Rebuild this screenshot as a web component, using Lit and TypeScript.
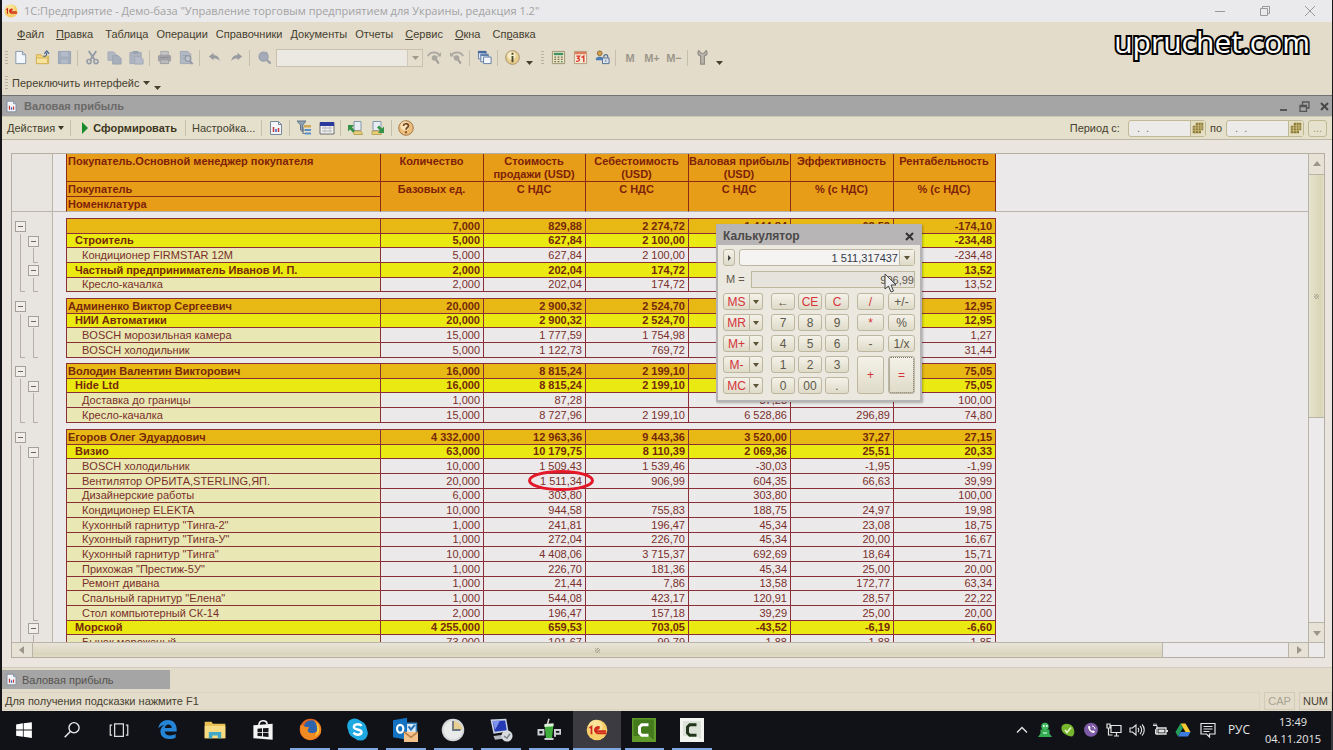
import { LitElement, html, svg, css, nothing } from "lit";
import { customElement } from "lit/decorators.js";
import { classMap } from "lit/directives/class-map.js";

type Row = [level: number, name: string, ...values: string[]];

const GROUPS: Row[][] = [
  [
    [0, "", "7,000", "829,88", "2 274,72", "-1 444,84", "-63,52", "-174,10"],
    [1, "Строитель", "5,000", "627,84", "2 100,00", "-1 472,16", "-70,10", "-234,48"],
    [2, "Кондиционер FIRMSTAR 12M", "5,000", "627,84", "2 100,00", "-1 472,16", "-70,10", "-234,48"],
    [1, "Частный предприниматель Иванов И. П.", "2,000", "202,04", "174,72", "27,32", "15,64", "13,52"],
    [2, "Кресло-качалка", "2,000", "202,04", "174,72", "27,32", "15,64", "13,52"],
  ],
  [
    [0, "Админенко Виктор Сергеевич", "20,000", "2 900,32", "2 524,70", "375,62", "14,88", "12,95"],
    [1, "НИИ Автоматики", "20,000", "2 900,32", "2 524,70", "375,62", "14,88", "12,95"],
    [2, "BOSCH морозильная камера", "15,000", "1 777,59", "1 754,98", "22,61", "1,29", "1,27"],
    [2, "BOSCH холодильник", "5,000", "1 122,73", "769,72", "353,01", "45,86", "31,44"],
  ],
  [
    [0, "Володин Валентин Викторович", "16,000", "8 815,24", "2 199,10", "6 616,14", "300,86", "75,05"],
    [1, "Hide Ltd", "16,000", "8 815,24", "2 199,10", "6 616,14", "300,86", "75,05"],
    [2, "Доставка до границы", "1,000", "87,28", "", "87,28", "", "100,00"],
    [2, "Кресло-качалка", "15,000", "8 727,96", "2 199,10", "6 528,86", "296,89", "74,80"],
  ],
  [
    [0, "Егоров Олег Эдуардович", "4 332,000", "12 963,36", "9 443,36", "3 520,00", "37,27", "27,15"],
    [1, "Визио", "63,000", "10 179,75", "8 110,39", "2 069,36", "25,51", "20,33"],
    [2, "BOSCH холодильник", "10,000", "1 509,43", "1 539,46", "-30,03", "-1,95", "-1,99"],
    [2, "Вентилятор ОРБИТА,STERLING,ЯП.", "20,000", "1 511,34", "906,99", "604,35", "66,63", "39,99"],
    [2, "Дизайнерские работы", "6,000", "303,80", "", "303,80", "", "100,00"],
    [2, "Кондиционер ELEKTA", "10,000", "944,58", "755,83", "188,75", "24,97", "19,98"],
    [2, "Кухонный гарнитур \"Тинга-2\"", "1,000", "241,81", "196,47", "45,34", "23,08", "18,75"],
    [2, "Кухонный гарнитур \"Тинга-У\"", "1,000", "272,04", "226,70", "45,34", "20,00", "16,67"],
    [2, "Кухонный гарнитур \"Тинга\"", "10,000", "4 408,06", "3 715,37", "692,69", "18,64", "15,71"],
    [2, "Прихожая \"Престиж-5У\"", "1,000", "226,70", "181,36", "45,34", "25,00", "20,00"],
    [2, "Ремонт дивана", "1,000", "21,44", "7,86", "13,58", "172,77", "63,34"],
    [2, "Спальный гарнитур \"Елена\"", "1,000", "544,08", "423,17", "120,91", "28,57", "22,22"],
    [2, "Стол компьютерный СК-14", "2,000", "196,47", "157,18", "39,29", "25,00", "20,00"],
    [1, "Морской", "4 255,000", "659,53", "703,05", "-43,52", "-6,19", "-6,60"],
    [2, "Бычок мороженый", "73,000", "101,67", "99,79", "1,88", "1,88", "1,85"],
  ],
];

const icon = (size: number, body: unknown) =>
  html`<svg width=${size} height=${size} viewBox="0 0 16 16" fill="none" aria-hidden="true">${body}</svg>`;

const report = svg`<path d="M2.5 1.5h8l3 3v10h-11z" fill="#f3f5f8" stroke="#77889c"/><path d="M10.500 1.500v3h3" stroke="#77889c"/><path d="M5.500 7v5" stroke="#c43a3a" stroke-width="1.500"/><path d="M8 9v3" stroke="#3a5ec4" stroke-width="1.500"/><path d="M10.500 8v4" stroke="#c43a3a" stroke-width="1.500"/>`;
const oneC = svg`<circle cx="8" cy="8" r="7.500" fill="#f6cf6a"/><circle cx="7" cy="5.500" r="5" fill="#fbe7a4" opacity=".8"/><path d="M2.500 6.500l1.500-1v5.500M10 6.200a2.300 2.300 0 1 0-1.500 4.200h6.500M9.500 7.500a1 1 0 1 0-1 1.400h6" stroke="#cf2a1b" stroke-width="1.300"/>`;
const wheel = svg`<path d="M1 6.500c2-5 10-5 12.500-1" stroke="#aeaba4" stroke-width="2"/><path d="M15 2v5h-4.500z" fill="#aeaba4"/><circle cx="8" cy="8.500" r="2.500" fill="#aba8a2" stroke="#a29f99"/><path d="M10 10.500l2.500 4" stroke="#a29f99" stroke-width="2.200"/>`;
const wheelBack = svg`<path d="M15 6.500c-2-5-10-5-12.500-1" stroke="#aeaba4" stroke-width="2"/><path d="M1 2v5h4.500z" fill="#aeaba4"/><circle cx="8" cy="8.500" r="2.500" fill="#aba8a2" stroke="#a29f99"/><path d="M10 10.500l2.500 4" stroke="#a29f99" stroke-width="2.200"/>`;

const I = {
  doc: svg`<path d="M3 1.500h7l3.500 3.500v9.500H3z" fill="#f4f7fb" stroke="#8598ad"/><path d="M10 1.500V5h3.500" fill="#cfdbe8" stroke="#8598ad"/>`,
  open: svg`<path d="M1.500 5h5l1 1.500h7v8h-13z" fill="#f3d678" stroke="#d0b05c"/><path d="M1.500 14.500v-6h12v6z" fill="#f8e39a" stroke="#d0b05c"/><path d="M9 7c3 0 3.500-1 3.500-4M10 4l2.500-3L15 4" stroke="#49678f" stroke-width="1.300"/>`,
  save: svg`<path d="M1.500 1.500h13v13h-13z" fill="#a3acbb" stroke="#98a1b1"/><path d="M4 2h8v5H4z" fill="#b3bbc8"/><path d="M4.500 10h7v4.500h-7z" fill="#b2bac6"/>`,
  cut: svg`<path d="M4 1l6 9M12 1L6 10" stroke="#959ca7" stroke-width="2"/><circle cx="4.300" cy="12.300" r="2.200" stroke="#959ca7" stroke-width="1.700"/><circle cx="11.700" cy="12.300" r="2.200" stroke="#959ca7" stroke-width="1.700"/>`,
  copy: svg`<path d="M1 2h6l3 3v6H1z" fill="#b1b8c3" stroke="#a5acb8"/><path d="M6 6h6l3 3v6H6z" fill="#a7afbb" stroke="#9ca4b0"/>`,
  paste: svg`<path d="M1 2.500h12v12H1z" fill="#adb4bf" stroke="#a2a9b5"/><path d="M4 1h6v3H4z" fill="#98a1ae"/><path d="M6 7h6l3 3v5H6z" fill="#b5bcc7" stroke="#a2a9b5"/>`,
  print: svg`<path d="M4 1.500h8v5H4z" fill="#c4c4c6" stroke="#a5a5a8"/><path d="M1 6l2-1h10l2 1v6H1z" fill="#a2a2a6"/><path d="M3.500 10.500h9v4h-9z" fill="#bcbcbf" stroke="#9a9a9e"/><path d="M3 8h10" stroke="#8e8e93"/>`,
  preview: svg`<path d="M1.500 1.500h8l3 3v10h-11z" fill="#b3b9c4" stroke="#a0a8b4"/><path d="M4 6h5M4 9h3" stroke="#98a1ae"/><circle cx="9.500" cy="9" r="3" fill="#bfc4cc" stroke="#9299a5" stroke-width="1.300"/><path d="M11.500 11.500l3 3.500" stroke="#9299a5" stroke-width="2"/>`,
  undo: svg`<path d="M2 7l5-4v2.500c4 0 6 2 6.500 6.500C12 9.500 10 8.700 7 8.700V11z" fill="#999ba0"/>`,
  redo: svg`<path d="M14 7L9 3v2.500c-4 0-6 2-6.500 6.500C4 9.500 6 8.700 9 8.700V11z" fill="#999ba0"/>`,
  find: svg`<circle cx="7" cy="7" r="4.700" fill="#a5acb8" stroke="#9ba2ae" stroke-width="1.600"/><path d="M4 2h7v3H4z" fill="#a0a7b3"/><path d="M10.500 10.500l4 4" stroke="#9fa1a7" stroke-width="2.600"/>`,
  windows: svg`<path d="M1.500 1.500h8v8h-8z" fill="#dce6f2" stroke="#5e7da5"/><path d="M1 1h9v2.500H1z" fill="#466a9b"/><path d="M4 4.500h8v8H4z" fill="#e8eef6" stroke="#5e7da5"/><path d="M4 4.500h8v2H4z" fill="#5e80ad"/><path d="M7 7.500h8v7H7z" fill="#f4f7fb" stroke="#5e7da5"/>`,
  info: svg`<circle cx="8" cy="8" r="7.300" fill="#e8cf8e" stroke="#a98d63"/><circle cx="7" cy="6" r="4.500" fill="#f6ecc8"/><path d="M8 3v2M8 6.500V13" stroke="#4d4b2c" stroke-width="2"/>`,
  calc: svg`<path d="M1.500 1.500h13v13h-13z" fill="#ece5cb" stroke="#9a916d"/><path d="M3 3h10v2.500H3z" fill="#3d9162"/><path d="M3.500 7.500h2M7 7.500h2M10.500 7.500h2M3.500 10h2M7 10h2M10.500 10h2M3.500 12.500h2M7 12.500h2" stroke="#77724f" stroke-width="1.300"/><path d="M10.500 12.500h2" stroke="#3d9162" stroke-width="1.300"/>`,
  calendar: svg`<path d="M1.500 1.500h13v13h-13z" fill="#f6ead7" stroke="#b39a77"/><path d="M2 2h12v2.500H2z" fill="#dd7a58"/><path d="M3.500 6.500h3.500l-1.800 2.400c2.700 0 2.200 3.800-1.900 3.100M9 8l2.500-1.500V13" stroke="#dc3b2d" stroke-width="1.500"/>`,
  users: svg`<circle cx="5" cy="3.500" r="2.500" fill="#d5a049" stroke="#86683b"/><path d="M1 9c1-2.500 7-2.500 8 0v2H1z" fill="#4a7bb4"/><path d="M8 8.500h7v6H8z" fill="#dbe3ed" stroke="#516d92"/><path d="M9.500 8V6.500c0-2 4-2 4 0V8" stroke="#516d92" stroke-width="1.300"/><path d="M11.500 10.500v2" stroke="#516d92"/>`,
  wrench: svg`<path d="M4 .500c-2 3-.5 5 2 6v8.500h4V6.500c2.500-1 4-3 2-6L9.700 3.500H6.300z" fill="#bcb7ae" stroke="#8e8a82" stroke-width="1.200"/>`,
  filter: svg`<path d="M1 1h9L6.800 5v7L4.500 10V5z" fill="#8fa1b3" stroke="#647688"/><path d="M8 5h7v2.500H8z" fill="#cfa955"/><path d="M9 9h6v2H9zM9 12.500h6v2H9z" fill="#5c8fc5"/><path d="M7 10h2M7 13.500h2M7 7v7" stroke="#68798a"/>`,
  sheet: svg`<path d="M1 2.500h14v11.500H1z" fill="#f2f2ee" stroke="#6b6b73"/><path d="M1 2h14v4H1z" fill="#2c3aa0"/><path d="M3 8h10M3 11h10" stroke="#a9abb4"/><path d="M6 6v8M11 6v8" stroke="#c1c2c8"/>`,
  restoreL: svg`<path d="M7 1.500h7v9H7z" fill="#e8edf3" stroke="#8496ab"/><path d="M6 11h8l1.500 3.500H7z" fill="#e6cd77" stroke="#bba55a"/><path d="M1 5v6.500L3 9.500l3 3 2-2-3-3L7 5z" fill="#349348"/>`,
  restoreR: svg`<path d="M3 1.500h8v9H3z" fill="#e8edf3" stroke="#8496ab"/><path d="M2 11h8l1.500 3.500H2z" fill="#e6cd77" stroke="#bba55a"/><path d="M14 13V6.500l-2 2-3-3-2 2 3 3L8 13z" fill="#349348"/>`,
  help: svg`<circle cx="8" cy="8" r="7.300" fill="#edbd7c" stroke="#a77949"/><circle cx="7" cy="6" r="4.500" fill="#f8e1b8"/><path d="M5.500 6c0-3 5-3 5-.2C10.500 7.500 8 7.500 8 9.700M8 11.300v1.900" stroke="#734320" stroke-width="1.700"/>`,
  grid: svg`<path d="M5 1h10v10h-3v4H1V5h4z" fill="#8c7a39"/><path d="M1 8h14M1 11.500h11M5 5h10M4.500 5v10M8.500 1v14M12 1v10" stroke="#d3c386"/>`,
};

const T = {
  start: svg`<path d="M1 3l6-1v5.600H1zM7.700 1.900L15 1v6.600H7.700zM1 8.400h6V14l-6-1zM7.700 8.400H15V15l-7.300-1z" fill="#fff"/>`,
  search: svg`<circle cx="9.800" cy="6" r="4.500" stroke="#eee" stroke-width="1.200"/><path d="M6.500 9.300L1.500 14.500" stroke="#eee" stroke-width="1.300"/>`,
  tasks: svg`<path d="M4.500 3h7v10h-7zM2.500 4H1v8h1.500M13.500 4H15v8h-1.500" stroke="#ddd"/>`,
  edge: svg`<path d="M1 7.300C1.600 3 4.600.800 8.300.800 12.700.800 15 4 15 8v1.600H5.800c.2 2.200 2 3 4.200 3 1.700 0 3-.4 4.200-1.100v2.800c-1.300.7-3 1-4.900 1C5 15.300 2.600 12.900 2.600 9.600c0-2.300 1.200-4 3-5C3.600 4.900 2 5.900 1 7.300zM5.900 6.900h5.300c0-1.700-.9-2.700-2.500-2.700S6.200 5.400 5.900 6.900z" fill="#2585d6"/>`,
  folder: svg`<path d="M.500 2h5l1 1.500h9V14H.500z" fill="#e8bf52"/><path d="M.500 5h15v9H.500z" fill="#f7dc84"/><path d="M3.500 14v-4.500h9V14h-2.500v-2H6v2z" fill="#3fa9c9"/>`,
  store: svg`<path d="M1 4.500l14-1V15L1 14z" fill="#f4f4f4"/><path d="M5 4.500c0-4 6-4.500 6-.5" stroke="#f4f4f4" stroke-width="1.200"/><path d="M4 7l3.300-.2v2.600H4zM8 6.700l4-.2v2.900H8zM4 10h3.300v2.600L4 12.400zM8 10h4v3l-4-.3z" fill="#15151a"/>`,
  firefox: svg`<circle cx="8" cy="8" r="7.500" fill="#e2641c"/><circle cx="8.500" cy="6.500" r="5" fill="#2e63ae"/><path d="M1 5c1 0 2 0 3 1l3 .500-1 2c0 2 4 3 6.500.500C13 6 12 3 10 1.500c5 1 6 6 5 9-2 4-7 6-11 3.500C1 12 .500 8 1 5z" fill="#f08a22"/><path d="M12 3c3 3 3 8-1 10 2-3 2-6 1-10z" fill="#f9c83c"/>`,
  skype: svg`<circle cx="6" cy="5.500" r="5.200" fill="#1fa9e1"/><circle cx="10" cy="10.500" r="5.200" fill="#1fa9e1"/><circle cx="8" cy="8" r="6.500" fill="#1fa9e1"/><path d="M10.800 5.500C9.800 4 5.500 3.900 5.500 6.200c0 2.300 5.300 1.300 5.300 3.700 0 2.200-4.400 2.200-5.600.3" stroke="#fff" stroke-width="1.700"/>`,
  outlook: svg`<path d="M6 4h9v7H6z" fill="#dbe9f6" stroke="#3180c0"/><path d="M0 2l9-1.500v14L0 13z" fill="#1272c1"/><ellipse cx="4.600" cy="7.500" rx="2" ry="2.500" stroke="#fff" stroke-width="1.400"/><path d="M10 6l1.500 2L14 5" stroke="#2872b7" stroke-width="1.300"/><path d="M7 9.500h9V16H7z" fill="#f2c28c"/><path d="M7 9.500l4.500 3.500L16 9.500" stroke="#b97c40"/>`,
  clock: svg`<circle cx="8" cy="8" r="7.500" fill="#d3d7d9"/><circle cx="8" cy="8" r="6.200" fill="#e9ebea"/><path d="M8 8V1.800A6.200 6.200 0 0 1 14.200 8z" fill="#e7cf94"/><path d="M8 2v6h5" stroke="#6d757c" stroke-width="1.200"/>`,
  remote: svg`<path d="M1 1l10.500-.5L13 9 3 10.500z" fill="#cbd3e4"/><path d="M2.300 2l8.500-.3 1 6.500-8 .9z" fill="#2639b5"/><path d="M2.300 2l5-.2-3.200 6z" fill="#7d92e8"/><path d="M3 12l8-1 1 2.500-8 1z" fill="#b5b9c1"/><circle cx="12" cy="12" r="3.700" fill="#d9dcdf"/><path d="M10 12l2 1.500 2-3" stroke="#78828c"/>`,
  cup: svg`<path d="M5 4.500l6-.5-1 9.500H6z" fill="#3fae3c"/><path d="M5 4l6-.5v2L5 6z" fill="#dff2dc"/><path d="M7 4l1-3.500" stroke="#ddd"/><path d="M1 8h3.300v3H1zM12 12.500V8h3.500v2.500H12M5 14h6" stroke="#cdd1d3" stroke-width="1.300"/>`,
  oneC,
  camG: svg`<path d="M0 0h16v16H0z" fill="#5f9a2a"/><path d="M1 1h13.500v13.500l-3-2.500H1z" fill="#437a1c"/><path d="M11 4.500H6.500L5 6v4l1.500 1.500H11" stroke="#fff" stroke-width="2"/>`,
  camW: svg`<path d="M0 0h16v16H0z" fill="#f2f5ef"/><path d="M2 2h12v12l-3-2H2z" fill="#dde2d8"/><path d="M11 4.500H6.500L5 6v4l1.500 1.500H11" stroke="#20361a" stroke-width="2"/>`,
  up: svg`<path d="M3 10.500l5-5 5 5" stroke="#e4e4e4" stroke-width="1.400"/>`,
  frog: svg`<circle cx="8" cy="4.500" r="3.700" fill="#42b95f"/><path d="M3.500 7.500h9v4l2.500 3.500H1l2.500-3.500z" fill="#35ab54"/><circle cx="6.800" cy="4" r="1" fill="#eaffef"/><circle cx="9.800" cy="4" r="1" fill="#eaffef"/><path d="M6 11h4" stroke="#a8ecb7" stroke-width="1.500"/>`,
  leaf: svg`<path d="M1.500 5C3 .500 10 1 12.500 4.500 15 8 15 13 12 14.500 7 14 .500 11 1.500 5z" fill="#77b52c"/><path d="M5 8l2 2.500 4-5" stroke="#e9f7cc" stroke-width="1.500"/>`,
  viber: svg`<circle cx="8" cy="7.700" r="7" fill="#7c5aa5"/><path d="M5 4.500c0 3 3 6.500 6 6.500l1-1.500-2-1.200-1 .9-2.200-2.500L7.700 6 6.500 3.800z" fill="#fff"/><path d="M9 4c2 .2 3 1.500 3 3.300" stroke="#fff"/>`,
  net: svg`<path d="M5 3.500h10v7H5zM8 14h5M10.500 10.500V14M1 2h3v4H1zM2.500 6v7h4" stroke="#e4e4e4" stroke-width="1.200"/>`,
  sound: svg`<path d="M1 6v4h2.500L7 13V3L3.500 6zM9 6c1 1 1 3 0 4M11 4c2.200 2 2.200 6 0 8M13 2.500c3 3 3 8 0 11" stroke="#e4e4e4" stroke-width="1.100"/>`,
  battery: svg`<path d="M5 6h9v6H5zM15.300 8v2" stroke="#e4e4e4" stroke-width="1.300"/><path d="M6.500 7.500h6v3h-6z" fill="#e4e4e4"/><path d="M1 3.500h4v2.500L3.500 7.500V12h2M2 1.500v2M4 1.500v2" stroke="#e4e4e4"/>`,
  drive: svg`<path d="M5.500 1.500h5l5 8.500h-5z" fill="#f5c933"/><path d="M5.500 1.500L.500 10 3 14.500l5-8.700z" fill="#259b5a"/><path d="M5.700 10h9.800L13 14.500H3z" fill="#3b7de0"/>`,
  note: svg`<path d="M1 1.500h14v10.500H9.500v3L6.500 12H1zM3.500 4.500h9M3.500 7h9M3.500 9.500h6" stroke="#e4e4e4" stroke-width="1.200"/>`,
};

@customElement("app-toolbar")
class AppToolbar extends LitElement {
  static styles = css`
    :host { display: block; color: #45402f; }
    nav, .bar { display: flex; align-items: center; height: 25px; padding-left: 3px; }
    nav { padding-left: 14px; gap: 6px; height: 23px; }
    a { color: inherit; text-decoration: none; padding: 0 1px; }
    .wide { margin-right: 4px; }
    button { font: inherit; color: inherit; border: 0; background: none; padding: 0; height: 22px; width: 22px; display: grid; place-items: center; flex: none; }
    .mem { color: #9c978a; font-weight: bold; }
    .sep { width: 1px; height: 16px; background: #c5beab; margin: 0 3px 0 2px; flex: none; }
    .grip { width: 3px; height: 14px; flex: none; background: repeating-linear-gradient(#b9b2a0 0 1px, transparent 1px 3px); }
    .gap { margin: 0 3px 0 6px; }
    .first { margin-left: 1px; }
    .more { width: 12px; place-items: end center; height: 15px; }
    .combo { display: flex; width: 147px; height: 18px; border: 1px solid #c9c1ae; box-sizing: border-box; background: #ece9e3; margin-left: 1px; }
    .combo input { flex: 1; min-width: 0; border: 0; background: none; outline: 0; }
    .combo button { width: 15px; height: 16px; border-left: 1px solid #d0c9b9; background: #e5decf; color: #a09a89; }
    .text { width: auto; display: flex; gap: 3px; align-items: center; margin: 0 2px 0 4px; }
  `;
  render() {
    const b = (label: string, g: unknown) => html`<button aria-label=${label} title=${label}>${icon(15, g)}</button>`;
    const sep = html`<span class="sep"></span>`;
    const arrow = html`<svg width="7" height="4" viewBox="0 0 7 4"><path d="M0 0h7L3.500 4z" fill="currentColor"/></svg>`;
    return html`
      <nav aria-label="Главное меню">
        <a class="wide" href="#file"><u>Ф</u>айл</a><a class="wide" href="#edit"><u>П</u>равка</a><a href="#table">Таблица</a><a href="#ops">Операции</a><a href="#refs">Справочники</a><a href="#docs">Документы</a><a class="wide" href="#reports">Отчеты</a><a class="wide" href="#service"><u>С</u>ервис</a><a class="wide" href="#windows"><u>О</u>кна</a><a href="#help">Сп<u>р</u>авка</a>
      </nav>
      <div class="bar">
        <span class="grip"></span><span class="first"></span>
        ${b("Новый", I.doc)}${b("Открыть", I.open)}${b("Сохранить", I.save)}${sep}
        ${b("Вырезать", I.cut)}${b("Копировать", I.copy)}${b("Вставить", I.paste)}${sep}
        ${b("Печать", I.print)}${b("Просмотр", I.preview)}${sep}
        ${b("Отменить", I.undo)}${b("Вернуть", I.redo)}${sep}
        ${b("Найти", I.find)}
        <div class="combo"><input aria-label="Поиск" /><button aria-label="История поиска">${arrow}</button></div>
        ${b("Найти следующее", wheel)}${b("Найти предыдущее", wheelBack)}${sep}
        ${b("Окна", I.windows)}${sep}${b("Справка", I.info)}
        <button class="more" aria-label="Ещё">${arrow}</button>
        <span class="grip gap"></span>
        ${b("Калькулятор", I.calc)}${b("Календарь", I.calendar)}${b("Пользователи", I.users)}${sep}
        <button class="mem">M</button><button class="mem">M+</button><button class="mem">M−</button>${sep}
        ${b("Настройки", I.wrench)}<button class="more" aria-label="Ещё">${arrow}</button>
      </div>
      <div class="bar">
        <span class="grip"></span><button class="text">Переключить интерфейс ${arrow}</button>
        <button class="more" aria-label="Ещё">${arrow}</button>
      </div>`;
  }
}

@customElement("profit-sheet")
class ProfitSheet extends LitElement {
  static styles = css`
    :host { display: grid; grid-template: minmax(0, 1fr) 15px / minmax(0, 1fr) 16px; border: 1px solid #b5aea2; background: #ebe9ea; min-height: 0; }
    .view { overflow: hidden; }
    table { table-layout: fixed; width: 100%; border-spacing: 0; color: #7a2f2a; font-size: 11px; line-height: 13px; }
    td, th { padding: 0; white-space: nowrap; overflow: hidden; }
    .a { width: 15px; } .b { width: 26px; } .s { width: 13px; } .n { width: 315px; }
    .odd { width: 103px; } .even { width: 102px; }
    .tree { background-color: #e8e4df; background-repeat: no-repeat; vertical-align: middle; }
    .edge { border-right: 1px solid #bab4aa; }
    thead .tree, thead .space { border-bottom: 1px solid #bab4aa; }
    thead th { background: #e89d18; color: #7d2208; vertical-align: top; padding: 1px 1px 0 0; white-space: normal; line-height: 13px; border-right: 1px solid #8c2a17; }
    thead .name { text-align: left; padding-left: 1px; border-left: 1px solid #8c2a17; }
    .under { border-bottom: 1px solid #8c2a17; }
    .end { border-bottom: 1px solid #bab4aa; }
    .tall { height: 28px; }
    tr { height: 15px; }
    .row:nth-child(3n) { height: 14px; }
    .gap { height: 7px; line-height: 0; }
    tbody:nth-of-type(3n) .gap { height: 6px; }
    .gap .line, .cell { border-bottom: 1px solid #8a2f37; }
    .cell { border-right: 1px solid #8a2f37; text-align: right; padding-right: 3px; }
    .name.cell { text-align: left; border-left: 1px solid #8a2f37; background: #e9e8b5; padding-right: 0; }
    .l0 .cell, .l1 .cell { font-weight: bold; color: #76280a; }
    .l0 .cell.cell { background: #e8b915; }
    .l1 .cell.cell { background: #eaea12; }
    .l0 .name { padding-left: 1px; } .l1 .name { padding-left: 8px; } .l2 .name { padding-left: 15px; }
    .trunk { background-image: linear-gradient(#b5afa7, #b5afa7); background-size: 1px 100%; background-position: 8px 0; }
    .b.trunk { background-position: 6px 0; }
    .foot { background-image: linear-gradient(#b5afa7, #b5afa7), linear-gradient(#b5afa7, #b5afa7); background-size: 1px 100%, 5px 1px; background-position: 8px 0, 8px 100%; }
    .b.foot { background-position: 6px 0, 6px 100%; }
    .toggle { display: grid; place-items: center; width: 11px; height: 11px; margin-left: 3px; padding: 0; box-sizing: border-box; border: 1px solid #a5a099; background: #f1eeea; }
    .toggle::before { content: ""; width: 5px; height: 1px; background: #6b655e; }
    .b .toggle { margin-left: 1px; }
    .mark { position: relative; overflow: visible; }
    .mark svg { position: absolute; left: 44px; top: -4px; z-index: 1; }
    .v, .h { display: flex; background: #eceaea; }
    .v { flex-direction: column; border-left: 1px solid #bab4a8; box-sizing: border-box; }
    .h { border-top: 1px solid #bab4a8; box-sizing: border-box; }
    .corner { border-left: 1px solid #bab4a8; border-top: 1px solid #bab4a8; background: #eceaea; }
    .btn { border: 0; padding: 0; background: #e7e2d6; display: grid; place-items: center; flex: none; height: 20px; }
    .h .btn { width: 20px; height: auto; }
    .v .btn:last-child { border-top: 1px solid #bab4a8; }
    .h .btn:last-child { border-left: 1px solid #bab4a8; }
    .v .thumb { height: 242px; border: solid #bab4a8; border-width: 1px 0; background: linear-gradient(90deg, #e6e3cf, #d9d6b6 80%, #e2dfc8); display: grid; place-items: center; }
    .h .thumb { flex: 0 1 1129px; border: solid #bab4a8; border-width: 0 1px; background: linear-gradient(#e8e4d8, #dad4bc 80%, #e2dcc8); display: grid; place-items: center; }
    .fill { flex: 1; }
    .dot { width: 5px; height: 5px; background: repeating-linear-gradient(135deg, #b5ae9a 0 1px, transparent 1px 2px); }
  `;
  private tri(d: string) {
    return html`<svg width="8" height="8" viewBox="0 0 8 8"><path d=${d} fill="#9b958a"/></svg>`;
  }
  private row(r: Row, i: number, g: Row[], open: boolean) {
    const [level, name, ...vals] = r;
    const next = g[i + 1];
    const last = !next && !open;
    const bEnd = last || next?.[0] === 1;
    return html`<tr class="row l${level}">
      <td class=${classMap({ tree: true, a: true, trunk: level > 0, foot: level > 0 && last })}>
        ${level === 0 ? html`<button class="toggle" aria-label="Свернуть группу"></button>` : nothing}</td>
      <td class=${classMap({ tree: true, b: true, edge: true, trunk: level === 2, foot: level === 2 && bEnd })}>
        ${level === 1 ? html`<button class="toggle" aria-label="Свернуть группу"></button>` : nothing}</td>
      <td></td>
      <td class="name cell">${name}</td>
      ${vals.map((v) => v === "1 511,34"
        ? html`<td class="cell mark">${v}<svg width="66" height="21" viewBox="0 0 66 21"><ellipse cx="33" cy="10.500" rx="31.500" ry="9" fill="none" stroke="#e3192a" stroke-width="3"/></svg></td>`
        : html`<td class="cell">${v}</td>`)}
      <td></td>
    </tr>`;
  }
  render() {
    const heads = [["Количество", "Базовых ед."], ["Стоимость продажи (USD)", "С НДС"], ["Себестоимость (USD)", "С НДС"], ["Валовая прибыль (USD)", "С НДС"], ["Эффективность", "% (с НДС)"], ["Рентабельность", "% (с НДС)"]];
    return html`
      <div class="view"><table>
        <colgroup><col class="a"/><col class="b"/><col class="s"/><col class="n"/>
          ${heads.map((_, i) => html`<col class=${i % 2 ? "even" : "odd"}/>`)}<col/></colgroup>
        <thead>
          <tr class="tall"><td class="tree edge" colspan="2" rowspan="3"></td><td class="space" rowspan="3"></td>
            <th class="name under">Покупатель.Основной менеджер покупателя</th>
            ${heads.map((h) => html`<th class="under">${h[0]}</th>`)}<td class="space" rowspan="3"></td></tr>
          <tr><th class="name under">Покупатель</th>${heads.map((h) => html`<th class="end" rowspan="2">${h[1]}</th>`)}</tr>
          <tr><th class="name end">Номенклатура</th></tr>
        </thead>
        ${GROUPS.map((g, gi) => html`<tbody>
          <tr class="gap"><td class="tree"></td><td class="tree edge"></td><td></td><td class="line" colspan="7"></td><td></td></tr>
          ${g.map((r, i) => this.row(r, i, g, gi === GROUPS.length - 1))}</tbody>`)}
      </table></div>
      <div class="v"><button class="btn" aria-label="Вверх">${this.tri("M0 6h8L4 1z")}</button><div class="thumb"><span class="dot"></span></div><span class="fill"></span><button class="btn" aria-label="Вниз">${this.tri("M0 2h8L4 7z")}</button></div>
      <div class="h"><button class="btn" aria-label="Влево">${this.tri("M6 0v8L1 4z")}</button><div class="thumb"><span class="dot"></span></div><span class="fill"></span><button class="btn" aria-label="Вправо">${this.tri("M2 0v8l5-4z")}</button></div>
      <div class="corner"></div>`;
  }
}

@customElement("calc-window")
class CalcWindow extends LitElement {
  static styles = css`
    :host { display: block; width: 206px; box-sizing: border-box; border: 2px solid #b5b3b3; border-top: 0; background: #ebe8df; color: #5e594b; font-size: 12px; box-shadow: 1px 1px 2px #0004; }
    header { display: flex; justify-content: space-between; align-items: center; height: 21px; padding: 3px 6px 0 5px; background: #b7b5b6; box-sizing: border-box; }
    h2 { margin: 0; font-size: 12px; color: #4b4a49; }
    button { font: inherit; color: inherit; padding: 0; border: 1px solid #bdb7a0; border-radius: 3px; background: linear-gradient(#f4f2e9, #dfdbc9); min-width: 0; line-height: 14px; display: grid; place-items: center; }
    header button { border: 0; background: none; }
    .body { padding: 4px 5px 6px; display: grid; gap: 5px; }
    .line { display: flex; gap: 4px; height: 17px; align-items: stretch; }
    .line .go { width: 12px; }
    .field { flex: 1; display: flex; border: 1px solid #bdb7a0; border-radius: 3px; background: #f5f4f2; }
    .field button { width: 15px; border-width: 0 0 0 1px; border-radius: 0; }
    input { flex: 1; width: 0; min-width: 0; border: 0; padding: 0 1px; background: none; font: inherit; font-size: 11px; text-align: right; color: #333a4a; outline: 0; }
    .memo label { width: 24px; padding-left: 3px; box-sizing: border-box; line-height: 17px; white-space: nowrap; font-size: 11px; }
    .memo .field { background: #e6e3dc; border-radius: 0; }
    .memo input { color: #5e594b; padding: 0; }
    .keys { display: flex; justify-content: space-between; }
    .block { display: grid; grid-template-rows: repeat(5, 17px); row-gap: 4px; }
    .m { grid-template-columns: 27px 13px; }
    .d { grid-template-columns: repeat(3, 24px); column-gap: 3px; }
    .o { grid-template-columns: 27px 27px; column-gap: 4px; }
    .m button:nth-child(odd) { border-radius: 3px 0 0 3px; }
    .m button:nth-child(even) { border-radius: 0 3px 3px 0; border-left: 0; }
    .red { color: #d5333a; }
    .big { grid-row: span 2; }
    .focus { outline: 1px dotted #77736a; outline-offset: -2px; }
  `;
  render() {
    const down = html`<svg width="6" height="4" viewBox="0 0 6 4"><path d="M0 0h6L3 4z" fill="#5b5335"/></svg>`;
    const k = (t: string, red = false, extra = "") => html`<button class="${red ? "red" : ""} ${extra}">${t}</button>`;
    return html`
      <header><h2>Калькулятор</h2><button aria-label="Закрыть"><svg width="9" height="9" viewBox="0 0 9 9"><path d="M1 1l7 7M8 1L1 8" stroke="#333" stroke-width="2"/></svg></button></header>
      <div class="body">
        <div class="line"><button class="go" aria-label="Вставить"><svg width="3" height="6" viewBox="0 0 3 6"><path d="M0 0v6l3-3z" fill="#444"/></svg></button>
          <div class="field"><input aria-label="Результат" value="1 511,317437"/><button aria-label="История">${down}</button></div></div>
        <div class="line memo"><label for="mem">M =</label><div class="field"><input id="mem" readonly value="906,99"/></div></div>
        <div class="keys">
          <div class="block m">${["MS", "MR", "M+", "M-", "MC"].map((t) => html`${k(t, true)}<button aria-label="${t} меню">${down}</button>`)}</div>
          <div class="block d">${k("←")}${k("CE", true)}${k("C", true)}${["7", "8", "9", "4", "5", "6", "1", "2", "3", "0", "00", "."].map((t) => k(t))}</div>
          <div class="block o">${k("/", true)}${k("+/-")}${k("*", true)}${k("%")}${k("-")}${k("1/x")}${k("+", true, "big")}${k("=", true, "big focus")}</div>
        </div>
      </div>`;
  }
}

@customElement("task-bar")
class TaskBar extends LitElement {
  static styles = css`
    :host { display: flex; height: 39px; background: #111217; color: #e6e6e6; font-family: "Open Sans", "Noto Sans", sans-serif; font-size: 11px; justify-content: space-between; }
    .apps { display: grid; grid-template-columns: repeat(15, 1fr); flex: 0 1 716px; }
    button { border: 0; background: none; padding: 0; display: grid; place-items: center; color: inherit; font: inherit; border-bottom: 2px solid transparent; }
    .apps button { margin: 0 4px; }
    .apps .run { border-bottom-color: #7fa8e0; }
    .apps .active { background: #3b3b41; margin: 0; }
    .tray { display: flex; align-items: center; }
    .tray .ic { width: 23px; height: 39px; flex: none; }
    .tray .last { width: 28px; }
    .lang { width: 34px; font-size: 12px; }
    time { width: 74px; text-align: center; line-height: 17px; padding: 0 1px 1px 0; }
    .desk { width: 2px; align-self: stretch; background: #35363b; }
  `;
  render() {
    const apps: [string, unknown, number, number][] = [["Пуск", T.start, 18, 0], ["Поиск", T.search, 18, 0], ["Представление задач", T.tasks, 20, 0], ["Edge", T.edge, 21, 0], ["Проводник", T.folder, 22, 0], ["Магазин", T.store, 22, 0], ["Firefox", T.firefox, 23, 1], ["Skype", T.skype, 23, 1], ["Outlook", T.outlook, 25, 1], ["Часы", T.clock, 24, 1], ["Удалённый доступ", T.remote, 24, 1], ["Стакан", T.cup, 24, 1], ["1С", T.oneC, 22, 2], ["Camtasia", T.camG, 24, 1], ["Camtasia Recorder", T.camW, 24, 1]];
    const tray: [string, unknown][] = [["Скрытые значки", T.up], ["Агент", T.frog], ["Состояние", T.leaf], ["Viber", T.viber], ["Сеть", T.net], ["Звук", T.sound], ["Батарея", T.battery], ["Диск", T.drive], ["Уведомления", T.note]];
    return html`
      <div class="apps">${apps.map(([l, g, s, run]) => html`<button aria-label=${l} class=${classMap({ run: run > 0, active: run === 2 })}>${icon(s, g)}</button>`)}</div>
      <div class="tray">${tray.map(([l, g], i) => html`<button class=${classMap({ ic: true, last: i === 8 })} aria-label=${l}>${icon(16, g)}</button>`)}
        <button class="lang">РУС</button><time>13:49<br/>04.11.2015</time><span class="desk"></span></div>`;
  }
}

@customElement("app-root")
class AppRoot extends LitElement {
  static styles = css`
    :host { display: flex; flex-direction: column; height: 100vh; position: relative; overflow: hidden; font: 11px/14px "Liberation Sans", Arial, sans-serif; color: #45402f; background: #e3dccb; }
    .app { flex: 1; min-height: 0; display: flex; flex-direction: column; border: solid #17171a; border-width: 0 1px 0 2px; }
    .title { display: flex; align-items: center; height: 22px; gap: 6px; padding: 0 3px 0 2px; background: #eaeaec; }
    h1 { flex: 1; margin: 0; font: 11px/20px "Open Sans", "Noto Sans", sans-serif; color: #a2a2a3; }
    .title button { width: 39px; }
    button { font: inherit; color: inherit; border: 0; padding: 0; background: none; display: grid; place-items: center; flex: none; }
    app-toolbar { height: 73px; }
    .doc { display: flex; align-items: center; gap: 6px; height: 20px; background: #a6a5a5; border-top: 1px solid #747372; padding: 0 1px 0 3px; }
    h2 { flex: 1; margin: 0; font-size: 11px; color: #6b6a69; }
    .doc button { width: 14px; }
    .tools { display: flex; align-items: center; height: 24px; background: #e4e0cb; border-bottom: 1px solid #bdb8a5; border-top: 1px solid #cfcab6; box-sizing: border-box; padding: 0 5px; }
    .tools > button { height: 20px; }
    .drop { display: flex; gap: 3px; align-items: center; }
    .sep { width: 1px; height: 16px; background: #c5bfa8; margin: 0 6px; flex: none; }
    .tight { margin: 0 2px; }
    .make { display: flex; gap: 5px; align-items: center; font-weight: bold; padding: 0 2px 0 5px; color: #3e3722; }
    .setup { padding-right: 4px; }
    .ic { width: 23px; }
    .push { flex: 1; }
    .date { display: flex; border: 1px solid #c1b993; border-radius: 3px; width: 78px; height: 17px; box-sizing: border-box; background: #ecebea; margin: 0 4px; }
    .date input { flex: 1; width: 0; min-width: 0; border: 0; background: none; outline: 0; font: inherit; padding: 0 8px; color: #6d6d6d; }
    .date button { width: 15px; border-left: 1px solid #c1b993; background: #e5dfc5; }
    .dots { border: 1px solid #c1b993; border-radius: 3px; width: 19px; box-sizing: border-box; color: #9c9474; background: #e6e1cd; }
    .tools .dots { height: 17px; }
    label { margin-right: 4px; } .to { margin: 0; }
    .area { flex: 1; min-height: 0; display: grid; padding: 13px 7px 9px 9px; background: #ebe5df; border-bottom: 1px solid #d1cbc0; }
    .tabs { padding-top: 2px; height: 21px; }
    .tab { display: flex; gap: 4px; width: 168px; height: 19px; align-items: center; padding-left: 3px; background: #a6a5a5; color: #55534f; }
    footer { display: flex; align-items: center; height: 20px; gap: 4px; }
    footer p { flex: 1; margin: 0; padding-left: 3px; line-height: 16px; border: 1px solid #dbd4c2; border-left: 0; }
    footer span { border: 1px solid #d2cbb8; padding: 0 3px; line-height: 16px; }
    footer .off { color: #a9a391; }
    .calc { position: absolute; left: 716px; top: 224px; z-index: 2; }
    .cursor { position: absolute; left: 884px; top: 273px; z-index: 3; }
    .brand { position: absolute; right: 23px; top: 22px; font: 30px/40px "Open Sans", "Noto Sans", sans-serif; color: #fff; -webkit-text-stroke: 4px #000; paint-order: stroke fill; z-index: 3; }
  `;
  render() {
    const sep = html`<span class="sep"></span>`;
    const tight = html`<span class="sep tight"></span>`;
    const arrow = html`<svg width="6" height="4" viewBox="0 0 6 4"><path d="M0 0h6L3 4z" fill="#3d3727"/></svg>`;
    const b = (l: string, g: unknown) => html`<button class="ic" aria-label=${l}>${icon(16, g)}</button>`;
    return html`
      <div class="app">
        <div class="title">${icon(14, oneC)}<h1>1С:Предприятие - Демо-база "Управление торговым предприятием для Украины, редакция 1.2"</h1>
          <button aria-label="Свернуть"><svg width="10" height="10"><path d="M0 5.500h10" stroke="#999"/></svg></button>
          <button aria-label="Восстановить"><svg width="10" height="10" fill="none"><path d="M.500 2.500h7v7h-7zM2.500 2.500v-2h7v7h-2" stroke="#999"/></svg></button>
          <button aria-label="Закрыть"><svg width="10" height="10"><path d="M0 0l10 10M10 0L0 10" stroke="#999"/></svg></button></div>
        <app-toolbar></app-toolbar>
        <div class="doc">${icon(13, report)}<h2>Валовая прибыль</h2>
          <button aria-label="Свернуть окно"><svg width="8" height="10"><path d="M0 9h7" stroke="#555" stroke-width="2"/></svg></button>
          <button aria-label="Восстановить окно"><svg width="11" height="11" fill="none"><path d="M1 4.500h6.500v6H1zM3.500 4V1H10v6H7.500M1 5.500h6.500" stroke="#555" stroke-width="1.300"/></svg></button>
          <button aria-label="Закрыть окно"><svg width="9" height="9"><path d="M1 1l7 7M8 1L1 8" stroke="#484848" stroke-width="2"/></svg></button></div>
        <div class="tools">
          <button class="drop">Действия ${arrow}</button>${sep}
          <button class="make"><svg width="6" height="12" viewBox="0 0 6 12"><path d="M0 0v12l6-6z" fill="#188a2d"/></svg>Сформировать</button>${sep}
          <button class="setup">Настройка...</button>${tight}
          ${b("Отчет", report)}${tight}${b("Отбор", I.filter)}${b("Таблица", I.sheet)}${tight}
          ${b("Восстановить", I.restoreL)}${b("Сохранить", I.restoreR)}${tight}${b("Справка", I.help)}
          <span class="push"></span>
          <label for="from">Период с:</label><div class="date"><input id="from" value=".  ."/><button aria-label="Выбрать">${icon(12, I.grid)}</button></div>
          <label class="to" for="to">по</label><div class="date"><input id="to" value=".  ."/><button aria-label="Выбрать">${icon(12, I.grid)}</button></div>
          <button class="dots" aria-label="Период">...</button>
        </div>
        <div class="area"><profit-sheet></profit-sheet></div>
        <div class="tabs"><button class="tab">${icon(13, report)}Валовая прибыль</button></div>
        <footer><p>Для получения подсказки нажмите F1</p><span class="off">CAP</span><span>NUM</span></footer>
      </div>
      <task-bar></task-bar>
      <calc-window class="calc"></calc-window>
      <svg class="cursor" width="13" height="20" viewBox="0 0 13 20"><path d="M1 1v15l3.500-3 2.500 6 2.500-1-2.500-6H12z" fill="#eee" stroke="#444"/></svg>
      <div class="brand">upruchet.com</div>`;
  }
}
